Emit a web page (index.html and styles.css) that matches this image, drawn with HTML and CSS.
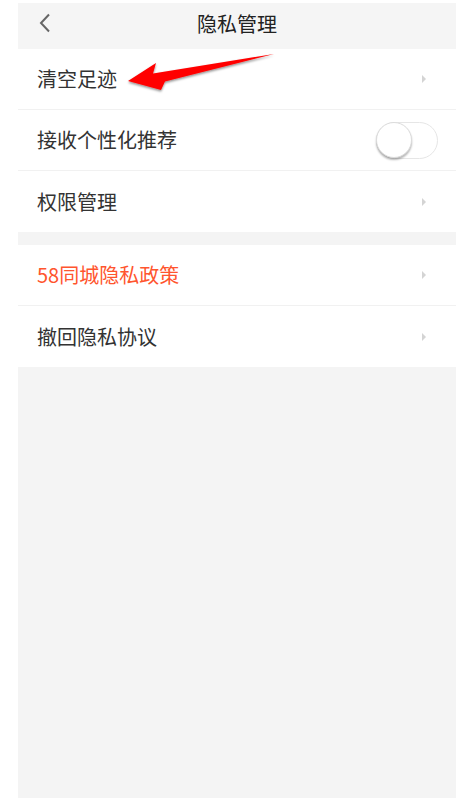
FILE: index.html
```html
<!DOCTYPE html>
<html lang="zh-CN">
<head>
<meta charset="utf-8">
<title>隐私管理</title>
<link rel="stylesheet" href="styles.css">
</head>
<body>
<div class="screen">
  <header class="navbar">
    <span class="back">
      <svg width="14" height="20" viewBox="0 0 14 20"><path d="M11 1.5 L3 10 L11 18.5" fill="none" stroke="#666" stroke-width="2"/></svg>
    </span>
    <h1 class="title">隐私管理</h1>
  </header>
  <section class="group">
    <div class="row"><span class="label">清空足迹</span><span class="chev"></span></div>
    <div class="row"><span class="label">接收个性化推荐</span><span class="switch"><span class="knob"></span></span></div>
    <div class="row"><span class="label">权限管理</span><span class="chev"></span></div>
  </section>
  <section class="group">
    <div class="row"><span class="label accent">58同城隐私政策</span><span class="chev"></span></div>
    <div class="row"><span class="label">撤回隐私协议</span><span class="chev"></span></div>
  </section>
</div>
<svg class="annot" width="461" height="799" viewBox="0 0 461 799">
  <defs>
    <filter id="sh" x="-10%" y="-30%" width="130%" height="180%">
      <feDropShadow dx="0" dy="1.5" stdDeviation="1.2" flood-color="#000" flood-opacity="0.45"/>
    </filter>
  </defs>
  <polygon points="128,81 156,63 153,73.5 274,54 165,81.5 161,90" fill="#ff0000" filter="url(#sh)"/>
</svg>
</body>
</html>
```
FILE: styles.css
```css
html, body {
  margin: 0;
  padding: 0;
  background: #ffffff;
}
body {
  font-family: "Noto Sans CJK SC", "Noto Sans", sans-serif;
  color: #333333;
  position: relative;
  width: 461px;
  height: 799px;
  overflow: hidden;
}
.screen {
  margin: 3px 5px 0 18px;
  width: 438px;
  height: 795px;
  background: #f4f4f4;
  display: flex;
  flex-direction: column;
  gap: 13px;
}
.navbar {
  height: 46px;
  background: #f5f5f5;
  position: relative;
  display: flex;
  align-items: center;
  justify-content: center;
  margin-bottom: -13px;
}
.back {
  position: absolute;
  left: 20px;
  top: 10px;
  display: block;
  line-height: 0;
}
.title {
  margin: 0;
  font-size: 20px;
  font-weight: normal;
  color: #222222;
  line-height: 1;
  padding-bottom: 5px;
}
.group {
  background: #ffffff;
  display: flex;
  flex-direction: column;
}
.row {
  height: 61px;
  box-sizing: border-box;
  border-bottom: 1px solid #f1f1f1;
  display: flex;
  align-items: center;
  justify-content: space-between;
  padding: 0 18px 0 19px;
}
.row:last-child {
  border-bottom: none;
  height: 61px;
}
.label {
  font-size: 20px;
  line-height: 1;
  color: #333333;
}
.label.accent {
  color: #ff552e;
}
.chev {
  width: 0;
  height: 0;
  border-top: 4px solid transparent;
  border-bottom: 4px solid transparent;
  border-left: 4px solid #d4d4d4;
  margin-right: 12px;
}
.switch {
  width: 62px;
  height: 37px;
  box-sizing: border-box;
  border: 1.5px solid #e6e6e6;
  border-radius: 19px;
  background: #ffffff;
  position: relative;
}
.knob {
  position: absolute;
  left: -1px;
  top: -1px;
  width: 36px;
  height: 36px;
  box-sizing: border-box;
  border-radius: 50%;
  background: #ffffff;
  border: 1px solid #dcdcdc;
  box-shadow: 0 2px 2px rgba(0,0,0,0.28);
}
.annot {
  position: absolute;
  left: 0;
  top: 0;
  pointer-events: none;
}
```
